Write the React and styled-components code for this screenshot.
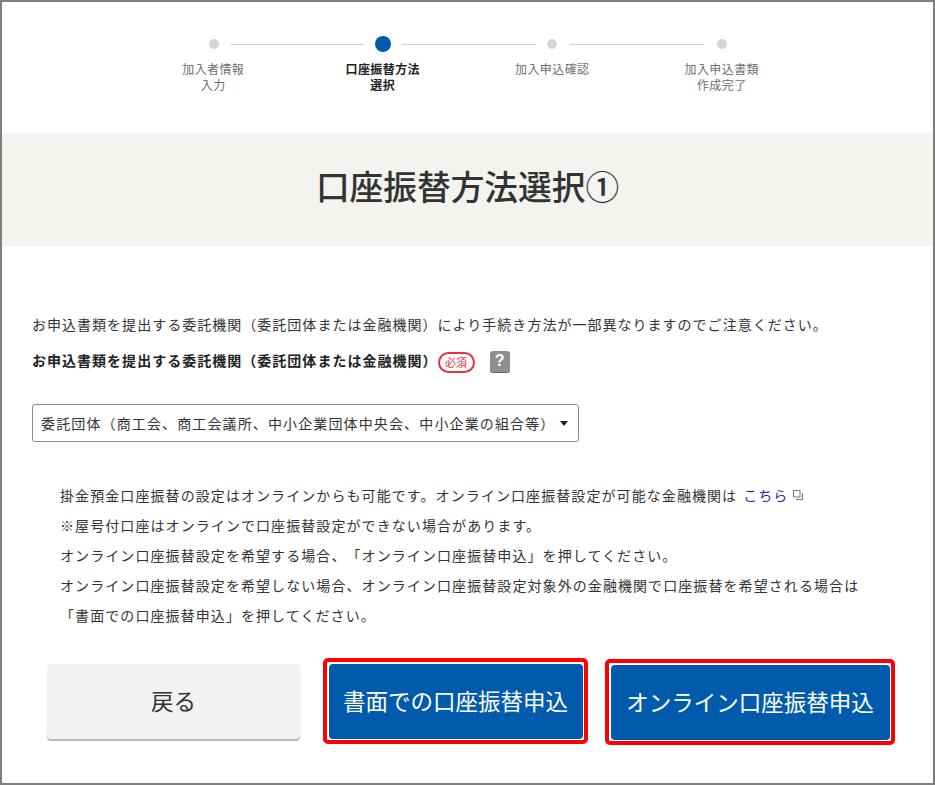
import React from "react";
import styled, { createGlobalStyle } from "styled-components";

const Global = createGlobalStyle`
  html, body { margin: 0; padding: 0; background: #fff; }
  body {
    font-family: "Noto Sans CJK JP", "Liberation Sans", sans-serif;
    color: #333;
    text-spacing-trim: space-all;
  }
  * { box-sizing: border-box; }
`;

const Frame = styled.div`
  width: 935px;
  height: 785px;
  border: 2px solid #7f7f7f;
  overflow: hidden;
  display: flex;
  flex-direction: column;
`;

const Stepper = styled.div`
  height: 131px;
  padding-top: 32px;
  display: flex;
  flex-direction: column;
  align-items: center;
`;

const Track = styled.div`
  width: 518px;
  height: 20px;
  display: flex;
  align-items: center;
`;

const Dot = styled.span`
  flex: none;
  width: ${(p) => (p.$active ? "16px" : "10px")};
  height: ${(p) => (p.$active ? "16px" : "10px")};
  border-radius: 50%;
  background: ${(p) => (p.$active ? "#005bac" : "#d4d4d4")};
`;

const Line = styled.span`
  flex: none;
  width: 134px;
  height: 1px;
  margin: 0 ${(p) => p.$space}px;
  background: #cfcfcf;
`;

const Labels = styled.div`
  margin-top: 7px;
  display: grid;
  grid-template-columns: repeat(4, 169.5px);
`;

const Label = styled.div`
  font-size: 12px;
  line-height: 16px;
  text-align: center;
  letter-spacing: 0.4px;
  white-space: pre-line;
  color: ${(p) => (p.$active ? "#222" : "#6f6f6f")};
  font-weight: ${(p) => (p.$active ? 700 : 400)};
`;

const Band = styled.div`
  height: 113px;
  padding-bottom: 8px;
  background: #f3f4ef;
  display: flex;
  align-items: center;
  justify-content: center;
`;

const Title = styled.h1`
  margin: 0;
  font-size: 33.7px;
  line-height: 1;
  font-weight: 500;
  color: #333;
`;

const Content = styled.div`
  padding: 68px 30px 0;
`;

const Text = styled.p`
  margin: 0;
  font-size: 14px;
  line-height: 20px;
  letter-spacing: 1.02px;
  white-space: nowrap;
  color: #333;
`;

const Field = styled.div`
  margin-top: 15px;
  display: flex;
  align-items: center;
  height: 22px;
`;

const FieldLabel = styled.span`
  font-size: 14px;
  font-weight: 700;
  letter-spacing: 1.02px;
  color: #222;
  white-space: nowrap;
`;

const Required = styled.span`
  margin: 5px 0 0 0;
  width: 37px;
  height: 21px;
  border: 2px solid #e8303f;
  border-radius: 11px;
  color: #e8303f;
  font-size: 11px;
  line-height: 1;
  display: flex;
  align-items: center;
  justify-content: center;
`;

const Help = styled.span`
  margin: 2px 0 0 15px;
  width: 20px;
  height: 21px;
  border-radius: 3px;
  background: #8f8f8f;
  box-shadow: 0 1px 0 #666;
  color: #fff;
  font-family: "Liberation Sans", sans-serif;
  font-weight: 700;
  font-size: 16px;
  display: flex;
  align-items: center;
  justify-content: center;
`;

const Select = styled.div`
  margin-top: 33px;
  width: 547px;
  height: 38px;
  border: 1px solid #8a8a8a;
  border-radius: 3px;
  padding: 0 10px 0 8px;
  display: flex;
  align-items: center;
  justify-content: space-between;
  font-size: 14px;
  letter-spacing: 1.13px;
  white-space: nowrap;
  color: #333;
`;

const Notes = styled.div`
  margin-top: 38px;
  padding-left: 28px;
`;

const Note = styled.p`
  margin: 0;
  height: 30px;
  font-size: 14px;
  line-height: 30px;
  letter-spacing: 1.08px;
  white-space: nowrap;
  color: #333;
`;

const TextLink = styled.a`
  color: #2a2ac8;
  margin-left: 6px;
  display: inline-flex;
  align-items: center;
  gap: 5px;
`;

const Actions = styled.div`
  margin-top: 28px;
  padding-left: 15px;
  display: flex;
  align-items: flex-start;
`;

const Button = styled.div`
  height: 75px;
  padding-bottom: 3px;
  border-radius: 4px;
  font-size: 22.5px;
  display: flex;
  align-items: center;
  justify-content: center;
  white-space: nowrap;
`;

const BackButton = styled(Button)`
  margin-top: 6px;
  width: 253px;
  background: #f2f2f2;
  color: #333;
  box-shadow: 0 2px 1px #b5b5b5;
`;

const PrimaryButton = styled(Button)`
  width: ${(p) => p.$width}px;
  background: #005bac;
  color: #fff;
`;

const Highlight = styled.div`
  border: 4px solid #f00;
  border-radius: 5px;
  padding: 1.5px;
  margin-left: ${(p) => p.$gap}px;
  margin-top: ${(p) => p.$top}px;
`;

const steps = [
  { text: "加入者情報\n入力" },
  { text: "口座振替方法\n選択", active: true },
  { text: "加入申込確認" },
  { text: "加入申込書類\n作成完了" },
];

export default function App() {
  return (
    <Frame>
      <Global />
      <Stepper>
        <Track>
          <Dot />
          <Line $space={11} />
          <Dot $active />
          <Line $space={11} />
          <Dot />
          <Line $space={13} />
          <Dot />
        </Track>
        <Labels>
          {steps.map((s) => (
            <Label key={s.text} $active={s.active}>
              {s.text}
            </Label>
          ))}
        </Labels>
      </Stepper>
      <Band>
        <Title>口座振替方法選択①</Title>
      </Band>
      <Content>
        <Text>お申込書類を提出する委託機関（委託団体または金融機関）により手続き方法が一部異なりますのでご注意ください。</Text>
        <Field>
          <FieldLabel>お申込書類を提出する委託機関（委託団体または金融機関）</FieldLabel>
          <Required>必須</Required>
          <Help>?</Help>
        </Field>
        <Select>
          <span>委託団体（商工会、商工会議所、中小企業団体中央会、中小企業の組合等）</span>
          <svg width="8" height="5" viewBox="0 0 8 5" aria-hidden="true">
            <path d="M0 0h8L4 5z" fill="#222" />
          </svg>
        </Select>
        <Notes>
          <Note>
            掛金預金口座振替の設定はオンラインからも可能です。オンライン口座振替設定が可能な金融機関は
            <TextLink>
              こちら
              <svg width="10" height="10" viewBox="0 0 10 10" aria-hidden="true" fill="none" stroke="#777">
                <rect x="0.5" y="0.5" width="6.5" height="6.5" />
                <path d="M3 9.5h6.5V3" />
              </svg>
            </TextLink>
          </Note>
          <Note>※屋号付口座はオンラインで口座振替設定ができない場合があります。</Note>
          <Note>オンライン口座振替設定を希望する場合、「オンライン口座振替申込」を押してください。</Note>
          <Note>オンライン口座振替設定を希望しない場合、オンライン口座振替設定対象外の金融機関で口座振替を希望される場合は</Note>
          <Note>「書面での口座振替申込」を押してください。</Note>
        </Notes>
        <Actions>
          <BackButton>戻る</BackButton>
          <Highlight $gap={23} $top={0}>
            <PrimaryButton $width={254}>書面での口座振替申込</PrimaryButton>
          </Highlight>
          <Highlight $gap={17} $top={1}>
            <PrimaryButton $width={279}>オンライン口座振替申込</PrimaryButton>
          </Highlight>
        </Actions>
      </Content>
    </Frame>
  );
}
